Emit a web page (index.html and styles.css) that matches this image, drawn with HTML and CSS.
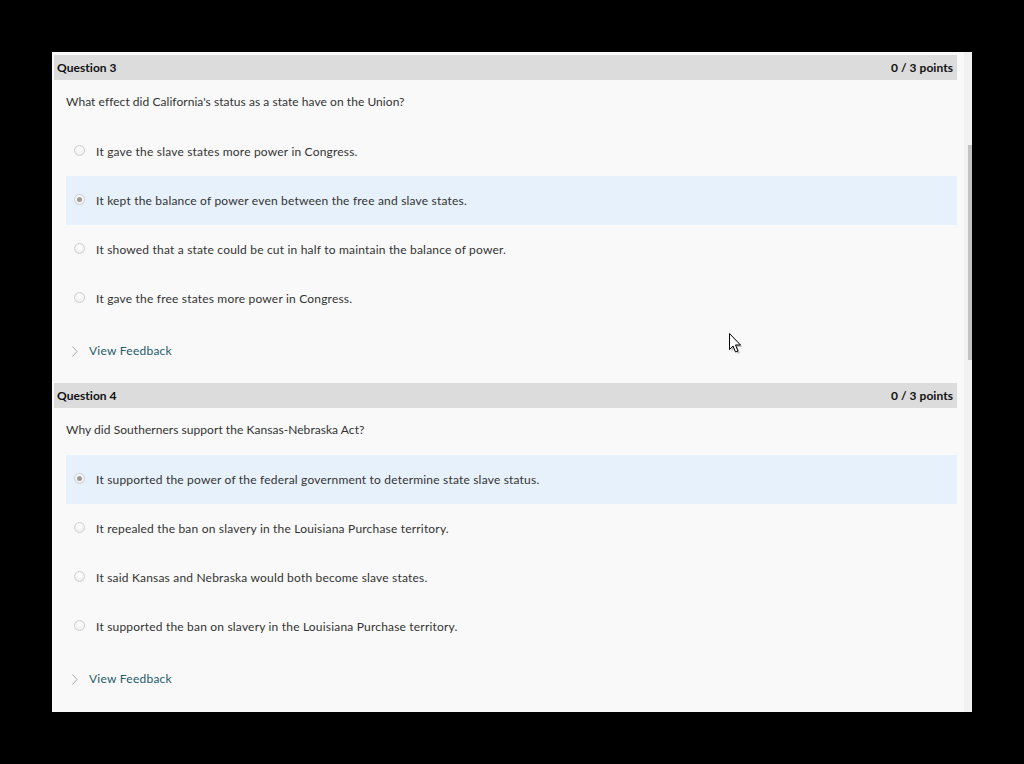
FILE: index.html
```html
<!DOCTYPE html>
<html>
<head>
<meta charset="utf-8">
<link rel="stylesheet" href="styles.css">
</head>
<body>
<div class="panel">
  <div class="main">
    <section class="question">
      <div class="qhead"><span>Question 3</span><span>0 / 3 points</span></div>
      <div class="qtext">What effect did California's status as a state have on the Union?</div>
      <div class="opts">
        <div class="opt"><span class="radio"></span><span>It gave the slave states more power in Congress.</span></div>
        <div class="opt sel"><span class="radio on"></span><span>It kept the balance of power even between the free and slave states.</span></div>
        <div class="opt"><span class="radio"></span><span>It showed that a state could be cut in half to maintain the balance of power.</span></div>
        <div class="opt"><span class="radio"></span><span>It gave the free states more power in Congress.</span></div>
      </div>
      <div class="fb"><svg class="chev" width="6" height="11" viewBox="0 0 6 11"><polyline points="0.5,0.5 5,5.5 0.5,10.5" fill="none" stroke="#a8a8a8" stroke-width="1"/></svg><span class="fblink">View Feedback</span></div>
    </section>
    <section class="question">
      <div class="qhead"><span>Question 4</span><span>0 / 3 points</span></div>
      <div class="qtext">Why did Southerners support the Kansas-Nebraska Act?</div>
      <div class="opts">
        <div class="opt sel"><span class="radio on"></span><span>It supported the power of the federal government to determine state slave status.</span></div>
        <div class="opt"><span class="radio"></span><span>It repealed the ban on slavery in the Louisiana Purchase territory.</span></div>
        <div class="opt"><span class="radio"></span><span>It said Kansas and Nebraska would both become slave states.</span></div>
        <div class="opt"><span class="radio"></span><span>It supported the ban on slavery in the Louisiana Purchase territory.</span></div>
      </div>
      <div class="fb"><svg class="chev" width="6" height="11" viewBox="0 0 6 11"><polyline points="0.5,0.5 5,5.5 0.5,10.5" fill="none" stroke="#a8a8a8" stroke-width="1"/></svg><span class="fblink">View Feedback</span></div>
    </section>
  </div>
  <div class="scroll"><div class="thumb"></div></div>
</div>
<svg class="cursor" width="16" height="23" viewBox="0 0 16 23"><path d="M2.5 2.5 L2.5 18.5 L6 15 L8.5 21 L11 20 L8.5 14 L13.5 14 Z" fill="#555" opacity="0.35" transform="translate(1,1)"/><path d="M1.5 1.5 L1.5 17.5 L5 14 L7.5 20 L10 19 L7.5 13 L12.5 13 Z" fill="#fff" stroke="#000" stroke-width="1" stroke-linejoin="round"/></svg>
</body>
</html>
```
FILE: styles.css
```css
html, body {
  margin: 0;
  padding: 0;
  background: #000;
}
body {
  width: 1024px;
  height: 764px;
  overflow: hidden;
  position: relative;
  font-family: Lato, "Liberation Sans", sans-serif;
  font-size: 12px;
  color: #333;
}
.panel {
  margin: 52px 0 0 52px;
  width: 920px;
  height: 660px;
  background: #f9f9f9;
  display: flex;
  overflow: hidden;
}
.main {
  flex: 1;
  padding: 3px 7px 0 2px;
}
.scroll {
  width: 8px;
  background: #f1f1f1;
  position: relative;
}
.thumb {
  margin: 93px 0 0 4px;
  width: 4px;
  height: 215px;
  background: #c3c3c3;
}
.question {
  height: 328px;
}
.qhead {
  height: 25px;
  line-height: 25px;
  background: #dcdcdc;
  display: flex;
  justify-content: space-between;
  padding: 0 4px 0 3px;
  font-weight: bold;
  color: #111;
  letter-spacing: 0.05px;
}
.qtext {
  height: 47px;
  box-sizing: border-box;
  padding: 14px 0 0 12px;
  line-height: 16px;
  letter-spacing: 0.05px;
}
.opts {
  margin-left: 12px;
}
.opt {
  height: 49px;
  display: flex;
  align-items: center;
  padding-left: 8px;
  gap: 11px;
  letter-spacing: 0.19px;
}
.opt.sel {
  background: #e7f1fb;
}
.radio {
  width: 11px;
  height: 11px;
  box-sizing: border-box;
  border-radius: 50%;
  border: 1px solid #cfcfcf;
  background: radial-gradient(circle at 50% 35%, #ffffff 0%, #e9e9e9 100%);
  position: relative;
  top: -1px;
}
.radio.on::after {
  content: "";
  position: absolute;
  left: 2px;
  top: 2px;
  width: 5px;
  height: 5px;
  border-radius: 50%;
  background: #9a9a9a;
}
.fb {
  display: flex;
  align-items: center;
  height: 16px;
  margin-top: 19px;
  padding-left: 18px;
}
.chev {
  margin-right: 11px;
  position: relative;
  top: 1px;
}
.fblink {
  color: #1f5a69;
  letter-spacing: 0.25px;
}
.cursor {
  position: absolute;
  left: 728px;
  top: 332px;
}
```
